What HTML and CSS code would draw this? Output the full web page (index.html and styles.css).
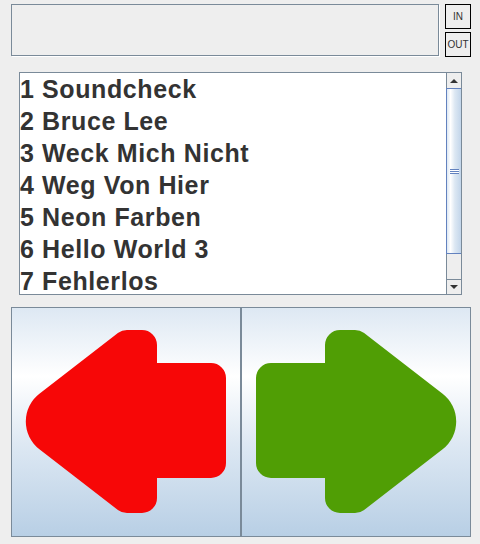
FILE: index.html
```html
<!DOCTYPE html>
<html>
<head>
<meta charset="utf-8">
<link rel="stylesheet" href="styles.css">
</head>
<body>
<div class="app">
  <div class="top-row">
    <div class="display"></div>
    <div class="io">
      <div class="io-btn">IN</div>
      <div class="io-btn">OUT</div>
    </div>
  </div>
  <div class="list">
    <div class="items">
      <div class="item">1 Soundcheck</div>
      <div class="item">2 Bruce Lee</div>
      <div class="item">3 Weck Mich Nicht</div>
      <div class="item">4 Weg Von Hier</div>
      <div class="item">5 Neon Farben</div>
      <div class="item">6 Hello World 3</div>
      <div class="item">7 Fehlerlos</div>
    </div>
    <div class="scrollbar">
      <div class="sb-btn up"><span class="tri-up"></span></div>
      <div class="thumb"><span class="grip"></span></div>
      <div class="track"></div>
      <div class="sb-btn down"><span class="tri-down"></span></div>
    </div>
  </div>
  <div class="controls">
    <div class="nav-btn">
      <svg class="arrow" width="228" height="228" viewBox="12 308 228 228">
        <path class="red" d="M39.4 393.8 L117.9 333.1 A15 15 0 0 1 127 330 L142 330 A15 15 0 0 1 157 345 L157 363 L211 363 A15 15 0 0 1 226 378 L226 463 A15 15 0 0 1 211 478 L157 478 L157 498 A15 15 0 0 1 142 513 L127 513 A15 15 0 0 1 117.9 509.9 L39.4 449.2 A35 35 0 0 1 39.4 393.8 Z"/>
      </svg>
    </div>
    <div class="nav-btn">
      <svg class="arrow" width="228" height="228" viewBox="242 308 228 228">
        <path class="green" transform="translate(482 0) scale(-1 1)" d="M39.4 393.8 L117.9 333.1 A15 15 0 0 1 127 330 L142 330 A15 15 0 0 1 157 345 L157 363 L211 363 A15 15 0 0 1 226 378 L226 463 A15 15 0 0 1 211 478 L157 478 L157 498 A15 15 0 0 1 142 513 L127 513 A15 15 0 0 1 117.9 509.9 L39.4 449.2 A35 35 0 0 1 39.4 393.8 Z"/>
      </svg>
    </div>
  </div>
</div>
</body>
</html>
```
FILE: styles.css
```css
html, body {
  margin: 0;
  padding: 0;
  background: #eeeeee;
}
body {
  font-family: "Liberation Sans", Arial, sans-serif;
  color: #333333;
}
.app {
  width: 480px;
  height: 544px;
  box-sizing: border-box;
  padding: 4px 0 0 11px;
  display: flex;
  flex-direction: column;
  align-items: flex-start;
}
.top-row {
  display: flex;
  align-items: flex-start;
  gap: 6px;
}
.display {
  width: 428px;
  height: 52px;
  box-sizing: border-box;
  border: 1px solid #7a8a99;
  box-shadow: 1px 1px 0 #ffffff;
  background: #eeeeee;
}
.io {
  display: flex;
  flex-direction: column;
  gap: 3px;
}
.io-btn {
  width: 26px;
  height: 25px;
  box-sizing: border-box;
  border: 1px solid #000000;
  display: flex;
  align-items: center;
  justify-content: center;
  font-size: 10px;
  color: #333333;
  white-space: nowrap;
  background: #eeeeee;
}
.list {
  margin: 15px 0 0 8px;
  width: 443px;
  height: 223px;
  box-sizing: border-box;
  border: 1px solid #7a8a99;
  background: #ffffff;
  display: flex;
}
.items {
  flex: 1;
  overflow: hidden;
}
.item {
  font-size: 25px;
  font-weight: bold;
  line-height: 32px;
  letter-spacing: 0.6px;
  color: #333333;
  white-space: nowrap;
}
.scrollbar {
  width: 15px;
  display: flex;
  flex-direction: column;
  background: #eeeeee;
}
.sb-btn {
  height: 15px;
  box-sizing: border-box;
  border-left: 1px solid #7a8a99;
  display: flex;
  align-items: center;
  justify-content: center;
  background: #eeeeee;
}
.sb-btn.down {
  border-top: 1px solid #7a8a99;
}
.tri-up {
  width: 0;
  height: 0;
  border-left: 4px solid transparent;
  border-right: 4px solid transparent;
  border-bottom: 4px solid #333333;
}
.tri-down {
  width: 0;
  height: 0;
  border-left: 4px solid transparent;
  border-right: 4px solid transparent;
  border-top: 4px solid #333333;
}
.thumb {
  height: 166px;
  box-sizing: border-box;
  border: 1px solid #6382bf;
  border-right: none;
  background: linear-gradient(to right, #dde8f3 0%, #ffffff 25%, #dde8f3 55%, #c2d5ea 100%);
  display: flex;
  align-items: center;
  justify-content: center;
}
.grip {
  width: 9px;
  height: 5px;
  margin-left: 1px;
  background: repeating-linear-gradient(to bottom, #6382bf 0, #6382bf 1px, #ffffff 1px, #ffffff 2px);
}
.track {
  flex: 1;
  border-left: 1px solid #7a8a99;
  background: #eeeeee;
}
.controls {
  margin: 12px 0 0 0;
  display: flex;
}
.nav-btn {
  width: 230px;
  height: 230px;
  box-sizing: border-box;
  border: 1px solid #7a8a99;
  background: linear-gradient(to bottom, #dde8f3 0%, #ffffff 30%, #dde8f3 60%, #b8cfe5 100%);
}
.arrow {
  display: block;
}
.red {
  fill: #f70707;
}
.green {
  fill: #509e05;
}
```
